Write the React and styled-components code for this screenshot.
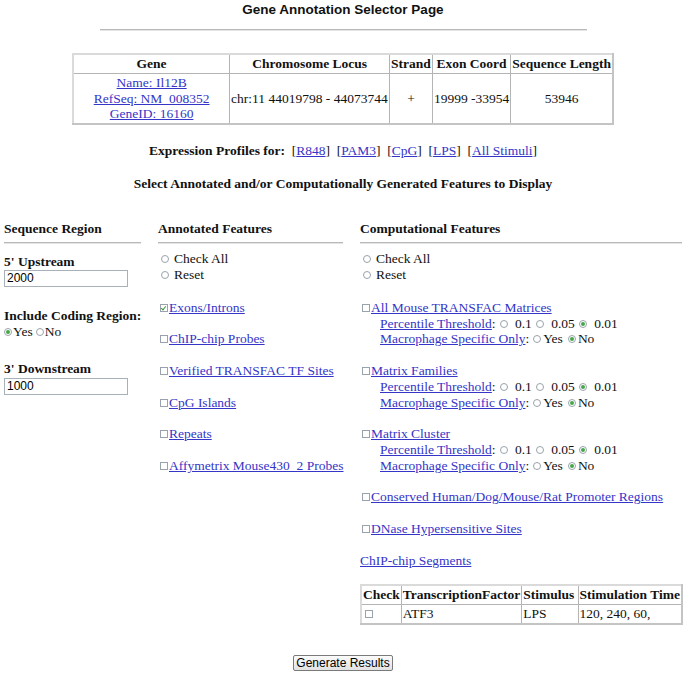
import React from "react";
import styled, { createGlobalStyle, css } from "styled-components";

const GlobalStyle = createGlobalStyle`
  html, body { margin: 0; padding: 0; background: #fff; }
  body {
    font-family: "Liberation Serif", "Times New Roman", serif;
    font-size: 13.5px;
    line-height: 15.8px;
    color: #111;
  }
`;

const Page = styled.div`
  padding: 2px 3px 0 4px;
`;

const Title = styled.h1`
  margin: 0;
  font-family: "Liberation Sans", Arial, sans-serif;
  font-size: 13.5px;
  line-height: 16px;
  font-weight: bold;
  text-align: center;
`;

const Rule = styled.hr`
  width: 487px;
  margin: 11px auto 0;
  height: 0;
  border: 0;
  border-top: 1px solid #b9b9b9;
  border-bottom: 1px solid #e4e4e4;
`;

const Link = styled.a`
  color: #3535c8;
  text-decoration: underline;
  cursor: pointer;
`;

const GeneTable = styled.table`
  margin: 22px auto 0;
  border-collapse: collapse;
  border: 2px solid #c4c4c4;
  border-top-color: #dadada;
  border-left-color: #dadada;
`;

const Cell = styled.td`
  border: 1px solid #b4b4b4;
  padding: 1px;
  text-align: ${(p) => p.$align || "center"};
  font-weight: ${(p) => (p.$head ? "bold" : "normal")};
  width: ${(p) => p.$w || "auto"};
  vertical-align: middle;
  white-space: nowrap;
`;

const CenterLine = styled.div`
  margin-top: ${(p) => p.$top}px;
  text-align: center;
  font-weight: bold;
  white-space: pre;
`;

const Plain = styled.span`
  font-weight: normal;
`;

const Columns = styled.div`
  margin-top: 29px;
  display: grid;
  grid-template-columns: 137px 185px 1fr;
  column-gap: 17px;
  align-items: start;
`;

const Column = styled.div`
  display: flex;
  flex-direction: column;
  min-width: 0;
`;

const ColHeader = styled.div`
  font-weight: bold;
  height: 16px;
  line-height: 16px;
  white-space: nowrap;
`;

const ColRule = styled.div`
  margin-top: 5px;
  height: 0;
  border-top: 1px solid #b9b9b9;
  border-bottom: 1px solid #e4e4e4;
  margin-bottom: 7px;
`;

const Label = styled.div`
  font-weight: bold;
  margin-top: ${(p) => p.$top || 0}px;
  line-height: 16px;
  white-space: nowrap;
`;

const TextInput = styled.input`
  box-sizing: border-box;
  width: 124px;
  height: 17px;
  margin: ${(p) => p.$top || 0}px 0 0 0;
  padding: 0 2px;
  border: 1px solid #a9b1b8;
  font-family: "Liberation Sans", Arial, sans-serif;
  font-size: 12px;
  color: #000;
  outline: none;
`;

const mark = css`
  appearance: none;
  -webkit-appearance: none;
  box-sizing: border-box;
  width: 8px;
  height: 8px;
  margin: 0;
  padding: 0;
  border: 1px solid #9aa3ab;
  background: #fff;
  vertical-align: 0px;
  position: relative;
  flex: none;
`;

const Radio = styled.input.attrs({ type: "radio" })`
  ${mark}
  border-radius: 50%;
  margin: ${(p) => p.$m || "0 5px 0 3px"};
  &:checked::after {
    content: "";
    position: absolute;
    left: 1px;
    top: 1px;
    width: 4px;
    height: 4px;
    border-radius: 50%;
    background: #45a848;
  }
`;

const Checkbox = styled.input.attrs({ type: "checkbox" })`
  ${mark}
  border-radius: 0;
  margin: ${(p) => p.$m || "0 1px 0 2px"};
  &:checked::after {
    content: "";
    position: absolute;
    left: 1px;
    top: 0px;
    width: 2px;
    height: 4px;
    border: solid #3a9a3e;
    border-width: 0 1.5px 1.5px 0;
    transform: rotate(40deg);
  }
`;

const Line = styled.div`
  line-height: 15.8px;
  height: 15.8px;
  white-space: nowrap;
`;

const Blank = styled.div`
  height: ${(p) => p.$h || 15.8}px;
`;

const SubLine = styled(Line)`
  padding-left: 20px;
`;

const ChipTable = styled.table`
  margin-top: 16px;
  border-collapse: collapse;
  border: 2px solid #c4c4c4;
  border-top-color: #dadada;
  border-left-color: #dadada;
  width: 323px;
`;

const ChipCell = styled.td`
  border: 1px solid #b4b4b4;
  padding: 1px;
  font-weight: ${(p) => (p.$head ? "bold" : "normal")};
  text-align: left;
  white-space: nowrap;
  width: ${(p) => p.$w || "auto"};
  height: ${(p) => (p.$head ? "15px" : "16px")};
`;

const ButtonRow = styled.div`
  margin-top: 30px;
  display: flex;
  justify-content: center;
`;

const Button = styled.button`
  font-family: "Liberation Sans", Arial, sans-serif;
  font-size: 12px;
  line-height: 14px;
  height: 16px;
  padding: 0 2px;
  color: #000;
  border: 1px solid #7a7a7a;
  border-radius: 2px;
  background: linear-gradient(#fbfbfb, #e2e2e2);
`;

const Threshold = ({ name }) => (
  <>
    <SubLine>
      <Link>Percentile Threshold</Link>:
      <Radio name={name + "-p"} $m="0 4px 0 4px" /> 0.1
      <Radio name={name + "-p"} $m="0 4px 0 4px" /> 0.05
      <Radio name={name + "-p"} $m="0 4px 0 4px" defaultChecked /> 0.01
    </SubLine>
    <SubLine>
      <Link>Macrophage Specific Only</Link>:
      <Radio name={name + "-m"} $m="0 2px 0 4px" />Yes
      <Radio name={name + "-m"} $m="0 2px 0 5px" defaultChecked />No
    </SubLine>
  </>
);

export default function App() {
  return (
    <>
      <GlobalStyle />
      <Page>
        <Title>Gene Annotation Selector Page</Title>
        <Rule />
        <GeneTable>
          <tbody>
            <tr>
              <Cell $head $w="153px">Gene</Cell>
              <Cell $head $w="157px">Chromosome Locus</Cell>
              <Cell $head>Strand</Cell>
              <Cell $head $w="74px">Exon Coord</Cell>
              <Cell $head>Sequence Length</Cell>
            </tr>
            <tr>
              <Cell>
                <div><Link>Name: Il12B</Link></div>
                <div><Link>RefSeq: NM_008352</Link></div>
                <div><Link>GeneID: 16160</Link></div>
              </Cell>
              <Cell $align="left">chr:11 44019798 - 44073744</Cell>
              <Cell>+</Cell>
              <Cell $align="left">19999 -33954</Cell>
              <Cell>53946</Cell>
            </tr>
          </tbody>
        </GeneTable>

        <CenterLine $top={18}>
          Expression Profiles for:{"  "}
          <Plain>
            [<Link>R848</Link>]{"  "}[<Link>PAM3</Link>]{"  "}[<Link>CpG</Link>]{"  "}[<Link>LPS</Link>]{"  "}[<Link>All Stimuli</Link>]
          </Plain>
        </CenterLine>
        <CenterLine $top={17}>
          Select Annotated and/or Computationally Generated Features to Display
        </CenterLine>

        <Columns>
          <Column>
            <ColHeader>Sequence Region</ColHeader>
            <ColRule />
            <Label $top={3}>5' Upstream</Label>
            <TextInput defaultValue="2000" />
            <Label $top={21}>Include Coding Region:</Label>
            <Line>
              <Radio name="coding" $m="0 1px 0 0" defaultChecked />Yes
              <Radio name="coding" $m="0 1px 0 3px" />No
            </Line>
            <Label $top={21}>3' Downstream</Label>
            <TextInput $top={1} defaultValue="1000" />
          </Column>

          <Column>
            <ColHeader>Annotated Features</ColHeader>
            <ColRule />
            <Line><Radio name="ann" />Check All</Line>
            <Line><Radio name="ann" />Reset</Line>
            <Blank $h={17.5} />
            <Line><Checkbox defaultChecked /><Link>Exons/Introns</Link></Line>
            <Blank />
            <Line><Checkbox /><Link>ChIP-chip Probes</Link></Line>
            <Blank />
            <Line><Checkbox /><Link>Verified TRANSFAC TF Sites</Link></Line>
            <Blank />
            <Line><Checkbox /><Link>CpG Islands</Link></Line>
            <Blank />
            <Line><Checkbox /><Link>Repeats</Link></Line>
            <Blank />
            <Line><Checkbox /><Link>Affymetrix Mouse430_2 Probes</Link></Line>
          </Column>

          <Column>
            <ColHeader>Computational Features</ColHeader>
            <ColRule />
            <Line><Radio name="comp" />Check All</Line>
            <Line><Radio name="comp" />Reset</Line>
            <Blank $h={17.5} />
            <Line><Checkbox /><Link>All Mouse TRANSFAC Matrices</Link></Line>
            <Threshold name="all" />
            <Blank />
            <Line><Checkbox /><Link>Matrix Families</Link></Line>
            <Threshold name="fam" />
            <Blank />
            <Line><Checkbox /><Link>Matrix Cluster</Link></Line>
            <Threshold name="clu" />
            <Blank />
            <Line><Checkbox /><Link>Conserved Human/Dog/Mouse/Rat Promoter Regions</Link></Line>
            <Blank />
            <Line><Checkbox /><Link>DNase Hypersensitive Sites</Link></Line>
            <Blank />
            <Line><Link>ChIP-chip Segments</Link></Line>
            <ChipTable>
              <tbody>
                <tr>
                  <ChipCell $head $w="37px">Check</ChipCell>
                  <ChipCell $head $w="105px">TranscriptionFactor</ChipCell>
                  <ChipCell $head $w="66px">Stimulus</ChipCell>
                  <ChipCell $head>Stimulation Time</ChipCell>
                </tr>
                <tr>
                  <ChipCell><Checkbox $m="0 0 0 2px" /></ChipCell>
                  <ChipCell>ATF3</ChipCell>
                  <ChipCell>LPS</ChipCell>
                  <ChipCell>120, 240, 60,</ChipCell>
                </tr>
              </tbody>
            </ChipTable>
          </Column>
        </Columns>

        <ButtonRow>
          <Button>Generate Results</Button>
        </ButtonRow>
      </Page>
    </>
  );
}
